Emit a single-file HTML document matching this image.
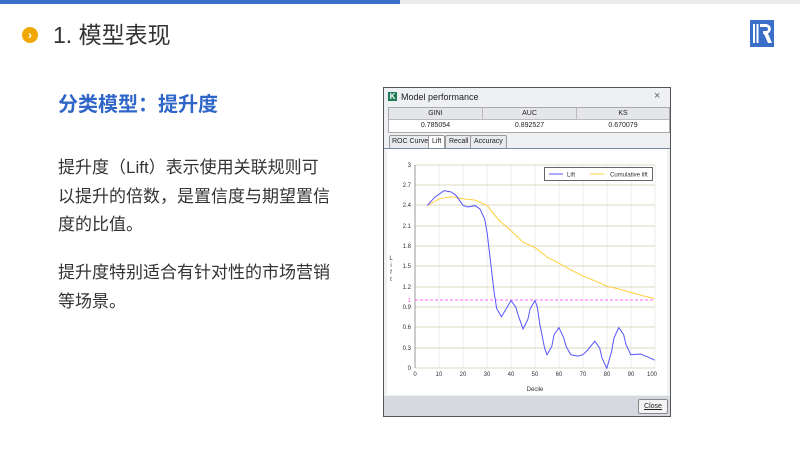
<!DOCTYPE html>
<html><head><meta charset="utf-8"><style>
body{margin:0;width:800px;height:450px;position:relative;background:#fff;font-family:"Liberation Sans","Noto Sans CJK SC",sans-serif;overflow:hidden}
.a{position:absolute}
.p{position:absolute;left:58px;font-size:17px;color:#333;line-height:28.5px;white-space:nowrap}
.win{position:absolute;left:383px;top:87px;width:286px;height:328px;border:1px solid #555;background:#eef0f3;font-size:7px;color:#222}
.tbl{position:absolute;left:4px;top:19px;width:280px;height:24px;border:1px solid #aaa;background:#fff}
.th{position:absolute;top:0;height:11px;background:#e4e6ea;border-right:1px solid #bbb;text-align:center;line-height:11px;border-bottom:1px solid #bbb}
.td{position:absolute;top:12px;height:12px;text-align:center;line-height:12px}
.tab{position:absolute;top:47px;height:12px;border:1px solid #999;border-bottom:none;background:#e8eaee;line-height:12px;padding:0 3px;border-radius:2px 2px 0 0;white-space:nowrap}
</style></head><body>
<div class="a" style="left:0;top:0;width:400px;height:4px;background:#3a6fc9"></div>
<div class="a" style="left:400px;top:0;width:400px;height:4px;background:#ebebeb"></div>
<div class="a" style="left:22px;top:27px;width:16px;height:16px;border-radius:50%;background:#f0a800;color:#fff;font-size:12px;font-weight:bold;text-align:center;line-height:16px">›</div>
<div class="a" style="left:53px;top:19px;font-size:23px;color:#333;line-height:32px">1. 模型表现</div>
<svg class="a" style="left:750px;top:20px" width="24" height="27" viewBox="0 0 24 27"><rect x="0" y="0" width="24" height="27" fill="#3a6fc9"/><rect x="3" y="4" width="2" height="19" fill="#fff"/><rect x="6.5" y="4" width="2" height="19" fill="#fff"/><path d="M10 4h6a5 5 0 0 1 2 9.5l4 9.5h-4l-4-9h-1v-3h3a2 2 0 0 0 0-4h-6z" fill="#fff"/></svg>
<div class="a" style="left:58px;top:92px;font-size:20px;font-weight:bold;color:#2f66c8;line-height:26px">分类模型：提升度</div>
<div class="p" style="top:154px">提升度（Lift）表示使用关联规则可<br>以提升的倍数，是置信度与期望置信<br>度的比值。</div>
<div class="p" style="top:259px">提升度特别适合有针对性的市场营销<br>等场景。</div>
<div class="win">
 <div class="a" style="left:4px;top:4px;width:9px;height:9px;background:#1e7a55;color:#fff;font-size:8px;font-weight:bold;line-height:9px;text-align:center">K</div>
 <div class="a" style="left:17px;top:3px;font-size:9px;line-height:12px">Model performance</div>
 <div class="a" style="left:270px;top:2px;font-size:11px;color:#666">×</div>
 <div class="tbl">
  <div class="th" style="left:0;width:93px">GINI</div><div class="th" style="left:94px;width:93px">AUC</div><div class="th" style="left:188px;width:92px;border-right:none">KS</div>
  <div class="td" style="left:0;width:93px">0.785054</div><div class="td" style="left:94px;width:93px">0.892527</div><div class="td" style="left:188px;width:92px">0.670079</div>
 </div>
 <div class="tab" style="left:5px;padding:0 2px">ROC Curve</div>
 <div class="tab" style="left:44px;background:#fff">Lift</div>
 <div class="tab" style="left:61px">Recall</div>
 <div class="tab" style="left:86px">Accuracy</div>
 <div class="a" style="left:0;top:60px;width:286px;height:1px;background:#7a8aa0"></div>
 <div class="a" style="left:3px;top:61px;width:280px;height:246px;background:#fff"></div>
 <div class="a" style="left:0;top:308px;width:286px;height:20px;background:#d6d9e0"></div>
 <div class="a" style="left:254px;top:311px;width:28px;height:13px;border:1px solid #888;border-radius:2px;background:#f4f4f4;text-align:center;line-height:13px;text-decoration:underline">Close</div>
</div>
<svg class="a" style="left:0;top:0" width="800" height="450">
 <g stroke="#eee"><line x1="439" y1="165" x2="439" y2="368"/><line x1="463" y1="165" x2="463" y2="368"/><line x1="487" y1="165" x2="487" y2="368"/><line x1="511" y1="165" x2="511" y2="368"/><line x1="535" y1="165" x2="535" y2="368"/><line x1="559" y1="165" x2="559" y2="368"/><line x1="583" y1="165" x2="583" y2="368"/><line x1="607" y1="165" x2="607" y2="368"/><line x1="631" y1="165" x2="631" y2="368"/><line x1="655" y1="165" x2="655" y2="368"/></g>
 <g stroke="#d8d8c0" stroke-width="1">
  <line x1="415" y1="368" x2="655" y2="368"/><line x1="415" y1="348" x2="655" y2="348"/><line x1="415" y1="327" x2="655" y2="327"/><line x1="415" y1="307" x2="655" y2="307"/><line x1="415" y1="287" x2="655" y2="287"/><line x1="415" y1="266" x2="655" y2="266"/><line x1="415" y1="246" x2="655" y2="246"/><line x1="415" y1="226" x2="655" y2="226"/><line x1="415" y1="205" x2="655" y2="205"/><line x1="415" y1="185" x2="655" y2="185"/><line x1="415" y1="165" x2="655" y2="165"/>
 </g>
 <line x1="415" y1="165" x2="415" y2="368" stroke="#999"/>
 <line x1="415" y1="300" x2="655" y2="300" stroke="#ff66ff" stroke-dasharray="3,2"/>
 <g transform="translate(415.3,368.3) scale(2.394,-67.8)" fill="none">
  <polyline vector-effect="non-scaling-stroke" stroke="#ffd040" stroke-width="1" points="5,2.4 10,2.5 15,2.53 20,2.5 25,2.48 30,2.4 35,2.18 40,2.03 45,1.86 50,1.78 55,1.64 60,1.55 65,1.45 70,1.36 75,1.29 80,1.21 85,1.17 90,1.12 95,1.07 100,1.03"/>
  <polyline vector-effect="non-scaling-stroke" stroke="#5555ff" stroke-width="1" points="5,2.4 8,2.52 12,2.62 15,2.6 17,2.55 20,2.4 22,2.38 25,2.4 27,2.35 29,2.2 30,2.0 31,1.7 32,1.4 33,1.1 34,0.88 36,0.76 38,0.88 40,1.0 42,0.9 43,0.78 45,0.58 47,0.72 48,0.88 50,1.0 51,0.9 52,0.65 54,0.3 55,0.2 57,0.32 58,0.5 60,0.6 62,0.45 63,0.32 65,0.2 68,0.18 70,0.2 72,0.27 75,0.4 77,0.3 78,0.15 80,0 82,0.25 83,0.45 85,0.6 87,0.5 88,0.35 90,0.2 94,0.21 97,0.17 100,0.12"/>
 </g>
 <g font-size="6" fill="#333" font-family="Liberation Sans" text-anchor="end">
  <text x="411" y="370">0</text><text x="411" y="350">0.3</text><text x="411" y="329">0.6</text><text x="411" y="309">0.9</text><text x="411" y="302" fill="#ff66ff">1</text><text x="411" y="289">1.2</text><text x="411" y="268">1.5</text><text x="411" y="248">1.8</text><text x="411" y="228">2.1</text><text x="411" y="207">2.4</text><text x="411" y="187">2.7</text><text x="411" y="167">3</text>
 </g>
 <g font-size="6" fill="#333" font-family="Liberation Sans" text-anchor="middle">
  <text x="415" y="376">0</text><text x="439" y="376">10</text><text x="463" y="376">20</text><text x="487" y="376">30</text><text x="511" y="376">40</text><text x="535" y="376">50</text><text x="559" y="376">60</text><text x="583" y="376">70</text><text x="607" y="376">80</text><text x="631" y="376">90</text><text x="652" y="376">100</text>
  <text x="535" y="391">Decile</text>
  <text x="391" y="260">L</text><text x="391" y="267">i</text><text x="391" y="274">f</text><text x="391" y="281">t</text>
 </g>
 <rect x="544.5" y="167.5" width="108" height="13" fill="#fff" stroke="#666"/>
 <line x1="549" y1="174" x2="563" y2="174" stroke="#5555ff"/><text x="567" y="176.5" font-size="6" font-family="Liberation Sans" fill="#333">Lift</text>
 <line x1="590" y1="174" x2="604" y2="174" stroke="#ffd040"/><text x="610" y="176.5" font-size="6" font-family="Liberation Sans" fill="#333">Cumulative lift</text>
</svg>
</body></html>
